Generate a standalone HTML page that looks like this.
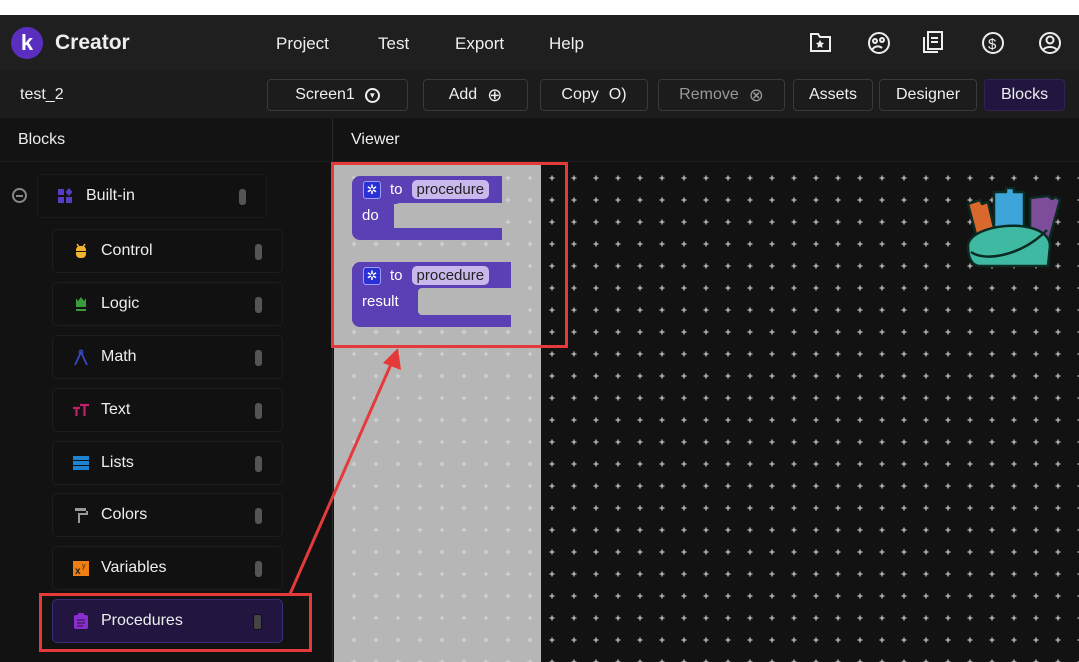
<!DOCTYPE html>
<html><head><meta charset="utf-8"><style>
*{box-sizing:border-box;margin:0;padding:0}
body{width:1079px;height:662px;overflow:hidden;background:#121212;font-family:"Liberation Sans",sans-serif;color:#eee;position:relative}
.abs{position:absolute}
.top{left:0;top:0;width:1079px;height:15px;background:#fff}
.hdr{left:0;top:15px;width:1079px;height:55px;background:#1f1f1f}
.tb{left:0;top:70px;width:1079px;height:48px;background:#1c1c1c}
.btn{position:absolute;top:79px;height:32px;border:1px solid #3a3a3a;border-radius:4px;font-size:16px;color:#eee;display:flex;align-items:center;justify-content:center;gap:10px;background:#1c1c1c}
.nav{position:absolute;top:34px;font-size:17px;color:#eee}
.item{position:absolute;left:52px;width:231px;height:44px;border:1px solid #1d1d1d;border-radius:5px;background:#111;font-size:16px;display:flex;align-items:center}
.item .ic{position:absolute;left:20px;top:13px;width:16px;height:16px}
.item .t{position:absolute;left:48px}
.item .p{position:absolute;right:20px;top:14px;width:7px;height:16px;border-radius:3px;background:#555}
.blk{position:absolute;background:#5b3fb5;color:#fff;font-size:15px}
.pill{background:#c9b8ec;color:#222;border-radius:5px;padding:0 5px;height:19px;display:inline-block;line-height:19px}
.gear{display:inline-block;width:18px;height:18px;background:#2a2fd6;border:1px solid #9aa0ff;border-radius:3px;color:#fff;font-size:13px;text-align:center;line-height:16px}
</style></head><body>
<div class="abs top"></div>
<div class="abs hdr"></div>
<div class="abs" style="left:11px;top:27px;width:32px;height:32px;border-radius:50%;background:#5a2fc0;color:#fff;font-weight:bold;font-size:22px;text-align:center;line-height:31px">k</div>
<div class="abs" style="left:55px;top:31px;font-size:21px;font-weight:bold;color:#eee">Creator</div>
<div class="nav" style="left:276px">Project</div>
<div class="nav" style="left:378px">Test</div>
<div class="nav" style="left:455px">Export</div>
<div class="nav" style="left:549px">Help</div>
<svg class="abs" style="left:800px;top:28px" width="270" height="32" fill="none" stroke="#eee" stroke-width="2">
<path d="M11 6h7l2 3h10v14H11z"/><path d="M20 13l1 2 2 .3-1.5 1.5.4 2.2-1.9-1-1.9 1 .4-2.2-1.5-1.5 2-.3z" fill="#eee" stroke-width="1"/>
<circle cx="79" cy="15" r="10"/><circle cx="75" cy="13" r="2"/><circle cx="82" cy="12" r="2"/><path d="M72 22c3-5 8-4 10-2"/>
<rect x="128" y="4" width="14" height="17"/><path d="M124 9v15h14"/><path d="M131 10h7M131 14h7"/>
<circle cx="193" cy="15" r="10"/><text x="188" y="21" fill="#eee" stroke="none" font-size="15" font-family="Liberation Sans">$</text>
<circle cx="250" cy="15" r="10"/><circle cx="250" cy="12" r="3.5"/><path d="M243 22c3-4 11-4 14 0"/>
</svg>
<div class="abs tb"></div>
<div class="abs" style="left:20px;top:86px;font-size:16px">test_2</div>
<div class="btn" style="left:267px;width:141px">Screen1 <span style="display:inline-block;width:15px;height:15px;border:2px solid #eee;border-radius:50%;font-size:8px;line-height:11px;text-align:center">▼</span></div>
<div class="btn" style="left:423px;width:105px">Add <span style="font-size:18px">⊕</span></div>
<div class="btn" style="left:540px;width:108px">Copy <span>O)</span></div>
<div class="btn" style="left:658px;width:127px;color:#999">Remove <span style="font-size:18px">⊗</span></div>
<div class="btn" style="left:793px;width:80px">Assets</div>
<div class="btn" style="left:879px;width:98px">Designer</div>
<div class="btn" style="left:984px;width:81px;background:#221640;border-color:#2f2450">Blocks</div>
<div class="abs" style="left:0;top:118px;width:1079px;height:44px;background:#131313;border-bottom:1px solid #1c1c1c"></div>
<div class="abs" style="left:332px;top:118px;width:1px;height:544px;background:#2a2a2a"></div>
<div class="abs" style="left:18px;top:131px;font-size:16px">Blocks</div>
<div class="abs" style="left:351px;top:131px;font-size:16px">Viewer</div>
<div class="abs" style="left:12px;top:188px;width:15px;height:15px;border:2px solid #888;border-radius:50%"><div style="position:absolute;left:2px;top:4.5px;width:7px;height:2px;background:#888"></div></div>
<div class="item" style="left:37px;top:174px;width:230px"><svg class="ic" viewBox="0 0 16 16" style="left:19px"><rect x="1" y="1" width="6" height="6" fill="#5a3bc4"/><rect x="1" y="9" width="6" height="6" fill="#5a3bc4"/><rect x="9" y="9" width="6" height="6" fill="#5a3bc4"/><path d="M12 0l3.5 4-3.5 4-3.5-4z" fill="#5a3bc4"/></svg><span class="t">Built-in</span><span class="p"></span></div>
<div class="item" style="top:229px"><svg class="ic" viewBox="0 0 16 16"><rect x="3" y="3" width="10" height="12" rx="4" fill="#f5b430"/><path d="M4 1l2 3M12 1l-2 3" stroke="#f5b430" stroke-width="1.5"/><rect x="3" y="8" width="10" height="1" fill="#111"/></svg><span class="t">Control</span><span class="p"></span></div>
<div class="item" style="top:282px"><svg class="ic" viewBox="0 0 16 16"><path d="M3 2l2 3 3-4 3 4 2-3v9H3z" fill="#3a9b3a"/><rect x="3" y="13" width="10" height="2" fill="#3a9b3a"/></svg><span class="t">Logic</span><span class="p"></span></div>
<div class="item" style="top:335px"><svg class="ic" viewBox="0 0 16 16"><path d="M2 16L8 3l6 13" stroke="#3848c0" stroke-width="1.8" fill="none"/><circle cx="8" cy="3" r="2" fill="none" stroke="#3848c0"/></svg><span class="t">Math</span><span class="p"></span></div>
<div class="item" style="top:388px"><svg class="ic" viewBox="0 0 16 16"><path d="M0 6h7M3.5 6v8M7 3h9M11.5 3v11" stroke="#c0206a" stroke-width="2.2"/></svg><span class="t">Text</span><span class="p"></span></div>
<div class="item" style="top:441px"><svg class="ic" viewBox="0 0 16 16"><rect x="0" y="1" width="16" height="4" fill="#1d82d0"/><rect x="0" y="6" width="16" height="4" fill="#1d82d0"/><rect x="0" y="11" width="16" height="4" fill="#1d82d0"/></svg><span class="t">Lists</span><span class="p"></span></div>
<div class="item" style="top:493px"><svg class="ic" viewBox="0 0 16 16"><path d="M2 1h11v3h2v4H7v8H5V6h8V4H2z" fill="#999"/></svg><span class="t">Colors</span><span class="p"></span></div>
<div class="item" style="top:546px"><svg class="ic" viewBox="0 0 16 16"><rect x="0" y="1" width="16" height="15" fill="#f07f10"/><text x="2" y="14" font-size="10" font-weight="bold" fill="#222" font-family="Liberation Sans">x</text><text x="9" y="8" font-size="7" fill="#222" font-family="Liberation Sans">y</text></svg><span class="t">Variables</span><span class="p"></span></div>
<div class="item" style="top:599px;background:#221641;border-color:#3a2c7a"><svg class="ic" viewBox="0 0 16 16"><rect x="1" y="2" width="14" height="14" rx="2" fill="#8a2ed0"/><rect x="5" y="0" width="6" height="4" fill="#8a2ed0"/><path d="M4 7h8M4 10h8M4 13h6" stroke="#221641"/></svg><span class="t">Procedures</span><span class="p" style="background:#444;border:1px solid #111;width:9px"></span></div>
<svg class="abs" style="left:334px;top:162px" width="745" height="500">
<defs><pattern id="d" x="9" y="5" width="22" height="22" patternUnits="userSpaceOnUse"><path d="M11 8.5v5M8.5 11h5" stroke="#c4c4c4" stroke-width="1.3"/></pattern>
<pattern id="g" x="9" y="5" width="22" height="22" patternUnits="userSpaceOnUse"><path d="M11 8.5v5M8.5 11h5" stroke="#d4d4d4" stroke-width="1.2"/></pattern></defs>
<rect x="0" y="0" width="745" height="500" fill="#121212"/>
<rect x="0" y="0" width="745" height="500" fill="url(#d)"/>
<rect x="0" y="0" width="207" height="500" fill="#b6b6b6"/>
<rect x="0" y="0" width="207" height="500" fill="url(#g)"/>
<g stroke="#0b2a22" stroke-width="2.5" stroke-linejoin="round">
<path d="M696 36l18-2 4 3 4-2 4 3-12 44-18-4z" fill="#7d4d9c"/>
<path d="M634 42l12-4 2 4 6-2 8 34-18 6z" fill="#d9682c"/>
<path d="M660 30h12v-4h8v4h10v48h-30z" fill="#3da5d9"/>
<path d="M634 84c0-14 30-22 52-20 20 2 30 10 30 20l-2 20H646c-8 0-12-8-12-20z" fill="#3fb9a2"/>
<path d="M637 90c14 10 50 4 76-22" fill="none"/>
</g>
</svg>
<!-- block 1 -->
<div class="blk" style="left:352px;top:176px;width:150px;height:28px;border-radius:8px 0 0 0"></div>
<div class="blk" style="left:352px;top:203px;width:42px;height:26px"></div>
<div class="blk" style="left:352px;top:228px;width:150px;height:12px;border-radius:0 0 0 8px"></div>
<div class="abs" style="left:394px;top:203px;width:108px;height:25px;background:#b6b6b6;border-radius:6px 0 0 6px"></div>
<div class="abs" style="left:363px;top:180px;display:flex;align-items:center;gap:9px;color:#fff;font-size:15px"><span class="gear">✲</span>to<span class="pill">procedure</span></div>
<div class="abs" style="left:362px;top:207px;color:#fff;font-size:15px">do</div>
<!-- block 2 -->
<div class="blk" style="left:352px;top:262px;width:159px;height:65px;border-radius:8px 0 0 8px"></div>
<div class="abs" style="left:418px;top:288px;width:93px;height:27px;background:#b6b6b6;border-radius:4px 0 0 4px"></div>
<div class="abs" style="left:363px;top:266px;display:flex;align-items:center;gap:9px;color:#fff;font-size:15px"><span class="gear">✲</span>to<span class="pill">procedure</span></div>
<div class="abs" style="left:362px;top:293px;color:#fff;font-size:15px">result</div>
<!-- annotations -->
<div class="abs" style="left:331px;top:162px;width:237px;height:186px;border:3px solid #e53a3a"></div>
<div class="abs" style="left:39px;top:593px;width:273px;height:59px;border:3px solid #e53a3a"></div>
<svg class="abs" style="left:0;top:0" width="1079" height="662"><line x1="290" y1="594" x2="392" y2="362" stroke="#e53a3a" stroke-width="3"/><path d="M398 348l3 22-18-7z" fill="#e53a3a"/></svg>
</body></html>
